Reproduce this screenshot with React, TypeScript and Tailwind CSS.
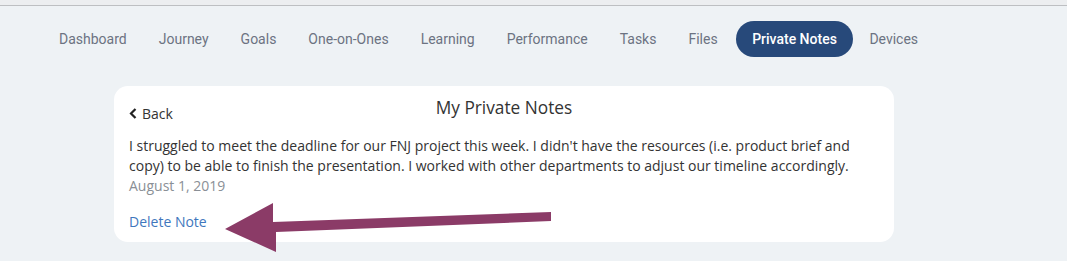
import React from "react";

const tabs = ["Dashboard", "Journey", "Goals", "One-on-Ones", "Learning", "Performance", "Tasks", "Files", "Private Notes", "Devices"];

export default function App() {
  return (
    <div className="w-[1067px] h-[261px] bg-[#eef2f5] overflow-hidden">
      <div className="h-[6px] bg-[#eceef0] border-b border-[#bdbfc2]" />
      <nav className="flex items-center pl-[43px] mt-[15px] h-[36px] font-['Roboto',sans-serif] text-[14px]">
        {tabs.map((t) =>
          t === "Private Notes" ? (
            <div key={t} className="ml-[2px] h-[36px] px-[16.5px] rounded-full bg-[#27497a] text-white font-medium text-[14px] flex items-center">
              {t}
            </div>
          ) : (
            <div key={t} className="px-[16px] text-[#6c7382]">
              {t}
            </div>
          )
        )}
      </nav>
      <div className="relative ml-[114px] mt-[29px] w-[780px] bg-white rounded-[14px] px-[15px] pt-[10px] pb-[10px] font-['Open_Sans',sans-serif] text-[14px] text-[#333333]">
        <div className="grid grid-cols-[1fr_auto_1fr] items-start">
          <div className="flex items-center gap-[5px] mt-[5px] h-[24px]">
            <svg width="8" height="11" viewBox="0 0 8 11" className="mt-[1px]">
              <path d="M6.5 1 L2 5.5 L6.5 10" stroke="#222" strokeWidth="2.2" fill="none" />
            </svg>
            <span className="text-[#333]">Back</span>
          </div>
          <div className="text-[17.3px] leading-[24px] text-[#333]">My Private Notes</div>
          <div />
        </div>
        <div className="mt-[11px] leading-[20px] pr-[20px]">
          I struggled to meet the deadline for our FNJ project this week. I didn't have the resources (i.e. product brief and copy) to be able to finish the presentation. I worked with other departments to adjust our timeline accordingly.
        </div>
        <div className="leading-[20px] text-[#8a8f96]">August 1, 2019</div>
        <div className="mt-[16px] leading-[20px] text-[#3f77bd]">Delete Note</div>
        <svg className="absolute left-0 top-0 overflow-visible" width="780" height="180">
          <polygon
            points="111,143 159,117 159,136 437,126 437,135 162,146 162,166"
            fill="#8b3b67"
          />
        </svg>
      </div>
    </div>
  );
}
